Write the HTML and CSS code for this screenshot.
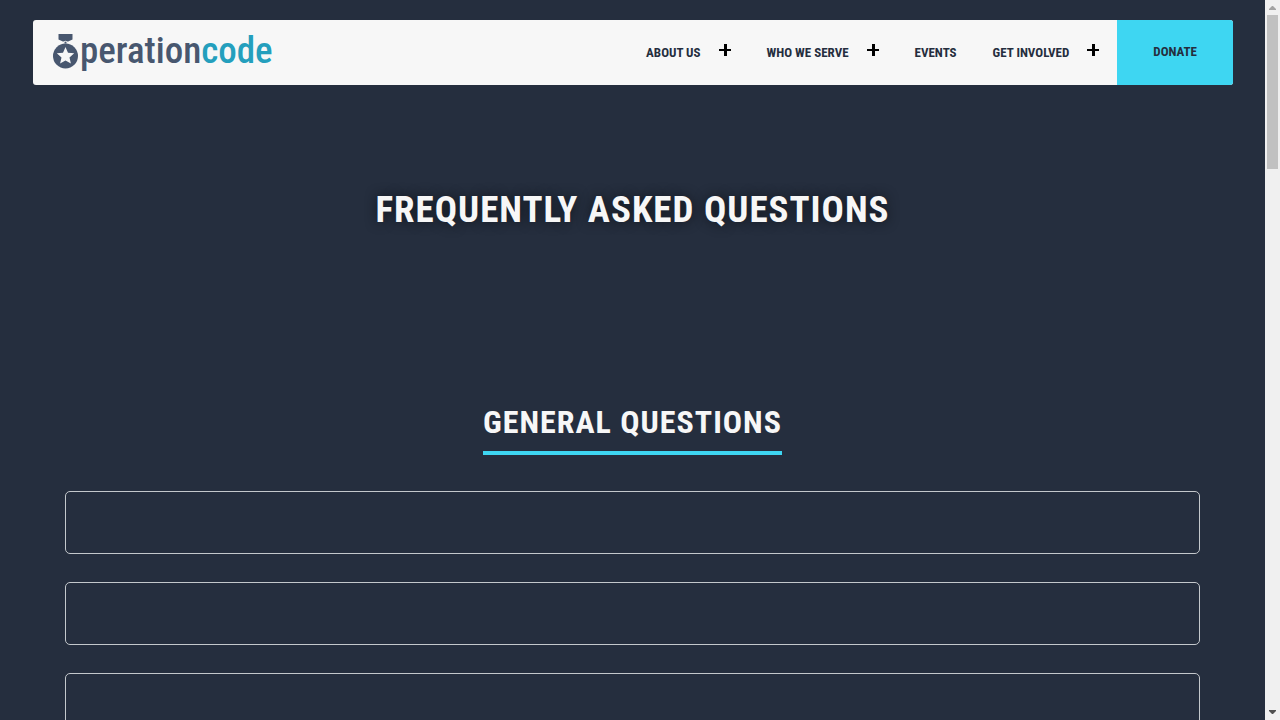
FILE: index.html
```html
<!DOCTYPE html>
<html lang="en">
<head>
<meta charset="utf-8">
<title>Frequently Asked Questions | Operation Code</title>
<link rel="stylesheet" href="styles.css">
</head>
<body>
<div class="viewport">
  <div class="page">
    <header class="header">
      <div class="bar">
        <a class="logo" href="#" aria-label="Operation Code">
          <svg class="medal" viewBox="0 0 25 35" aria-hidden="true">
            <path fill="#48576f" d="M5.500 0h14v5.500l-6 2.800v1.200h-2V8.300l-6-2.800z"/>
            <path fill="none" stroke="#f7f7f7" d="M7 9.500l5.500-2.200L18 9.500"/>
            <circle cx="12.500" cy="22" r="12.500" fill="#48576f"/>
            <path fill="#f7f7f7" d="M12.500 13l2.500 5.700 6.200.6-4.700 4.200 1.400 6.100-5.400-3.200-5.400 3.200 1.400-6.100-4.700-4.200 6.200-.6z"/>
          </svg>
          <span class="wordmark">peration<span class="code">code</span></span>
        </a>
        <nav class="nav">
          <div class="item"><a href="#">About Us</a><button class="plus" aria-label="Open About Us menu"><svg viewBox="0 0 12 12"><path d="M5 0h3v5h4v2H8v5H5V7H0V5h5z"/></svg></button></div>
          <div class="item"><a href="#">Who We Serve</a><button class="plus" aria-label="Open Who We Serve menu"><svg viewBox="0 0 12 12"><path d="M5 0h3v5h4v2H8v5H5V7H0V5h5z"/></svg></button></div>
          <div class="item"><a href="#">Events</a></div>
          <div class="item"><a href="#">Get Involved</a><button class="plus" aria-label="Open Get Involved menu"><svg viewBox="0 0 12 12"><path d="M5 0h3v5h4v2H8v5H5V7H0V5h5z"/></svg></button></div>
          <a class="donate" href="#">Donate</a>
        </nav>
      </div>
    </header>
    <section class="hero"><h1>Frequently Asked Questions</h1></section>
    <main class="content">
      <h2>General Questions</h2>
      <div class="cards">
        <article class="card"></article>
        <article class="card"></article>
        <article class="card"></article>
      </div>
    </main>
  </div>
  <div class="scrollbar" aria-hidden="true">
    <svg class="arrow" viewBox="0 0 15 15"><path fill="#a3a3a3" d="M4 10h7v-1l-3-3H7L4 9z"/></svg>
    <div class="track"><div class="thumb"></div></div>
    <svg class="arrow" viewBox="0 0 15 15"><path fill="#505050" d="M4 5h7v1L8 9H7L4 6z"/></svg>
  </div>
</div>
</body>
</html>
```
FILE: styles.css
```css
* { box-sizing: border-box; }
body {
  margin: 0;
  background: #252e3e;
  color: #f7f7f7;
  font-family: "DIN Condensed", "Roboto Condensed", "Liberation Sans Narrow", "Liberation Sans", sans-serif;
  overflow: hidden;
}
a { color: inherit; text-decoration: none; }
.viewport { display: flex; height: 100vh; }
.page { flex: 1; overflow: hidden; }
.header { padding: 20px 32px 0 33px; }
.bar {
  display: flex;
  justify-content: space-between;
  max-width: 1200px;
  height: 65px;
  margin: 0 auto;
  background: #f7f7f7;
  border-radius: 3px;
  overflow: hidden;
  color: #252e3e;
}
.logo { display: flex; align-items: center; padding: 0 0 3px 20px; gap: 2px; }
.medal { width: 25px; height: 35px; }
.wordmark {
  font-family: "Roboto Condensed", "Roboto", sans-serif;
  font-size: 37px;
  font-weight: 500;
  line-height: 40px;
  color: #48576f;
}
.code { color: #249fbd; }
.nav { display: flex; font-size: 13px; font-weight: 700; text-transform: uppercase; white-space: nowrap; }
.item { display: flex; align-items: center; gap: 18px; padding: 0 18px; }
.plus { width: 12px; height: 12px; padding: 0; margin-bottom: 5px; border: 0; background: none; display: flex; }
.plus svg { width: 12px; height: 12px; }
.donate { display: flex; align-items: center; padding: 0 36px 2px; background: #3ed6f2; }
.hero { display: flex; justify-content: center; padding: 93px 16px 148px; }
h1, h2 { margin: 0; font-weight: 700; text-transform: uppercase; letter-spacing: 1px; }
h1 { font-size: 37px; line-height: 64px; text-shadow: 0 0 12px #11151c; }
.content { display: flex; flex-direction: column; align-items: center; padding: 0 65px; }
h2 { font-size: 32px; line-height: 58px; padding-top: 3px; border-bottom: 4px solid #3ed6f2; }
.cards { display: flex; flex-direction: column; gap: 28px; width: 100%; margin-top: 36px; }
.card { height: 63px; border: 1px solid #c4c8cc; border-radius: 5px; }
.scrollbar { display: flex; flex-direction: column; width: 15px; background: #f0f0f0; }
.arrow { width: 15px; height: 15px; }
.track { flex: 1; padding: 0 2px; }
.thumb { height: 154px; background: #c1c1c1; }
```
